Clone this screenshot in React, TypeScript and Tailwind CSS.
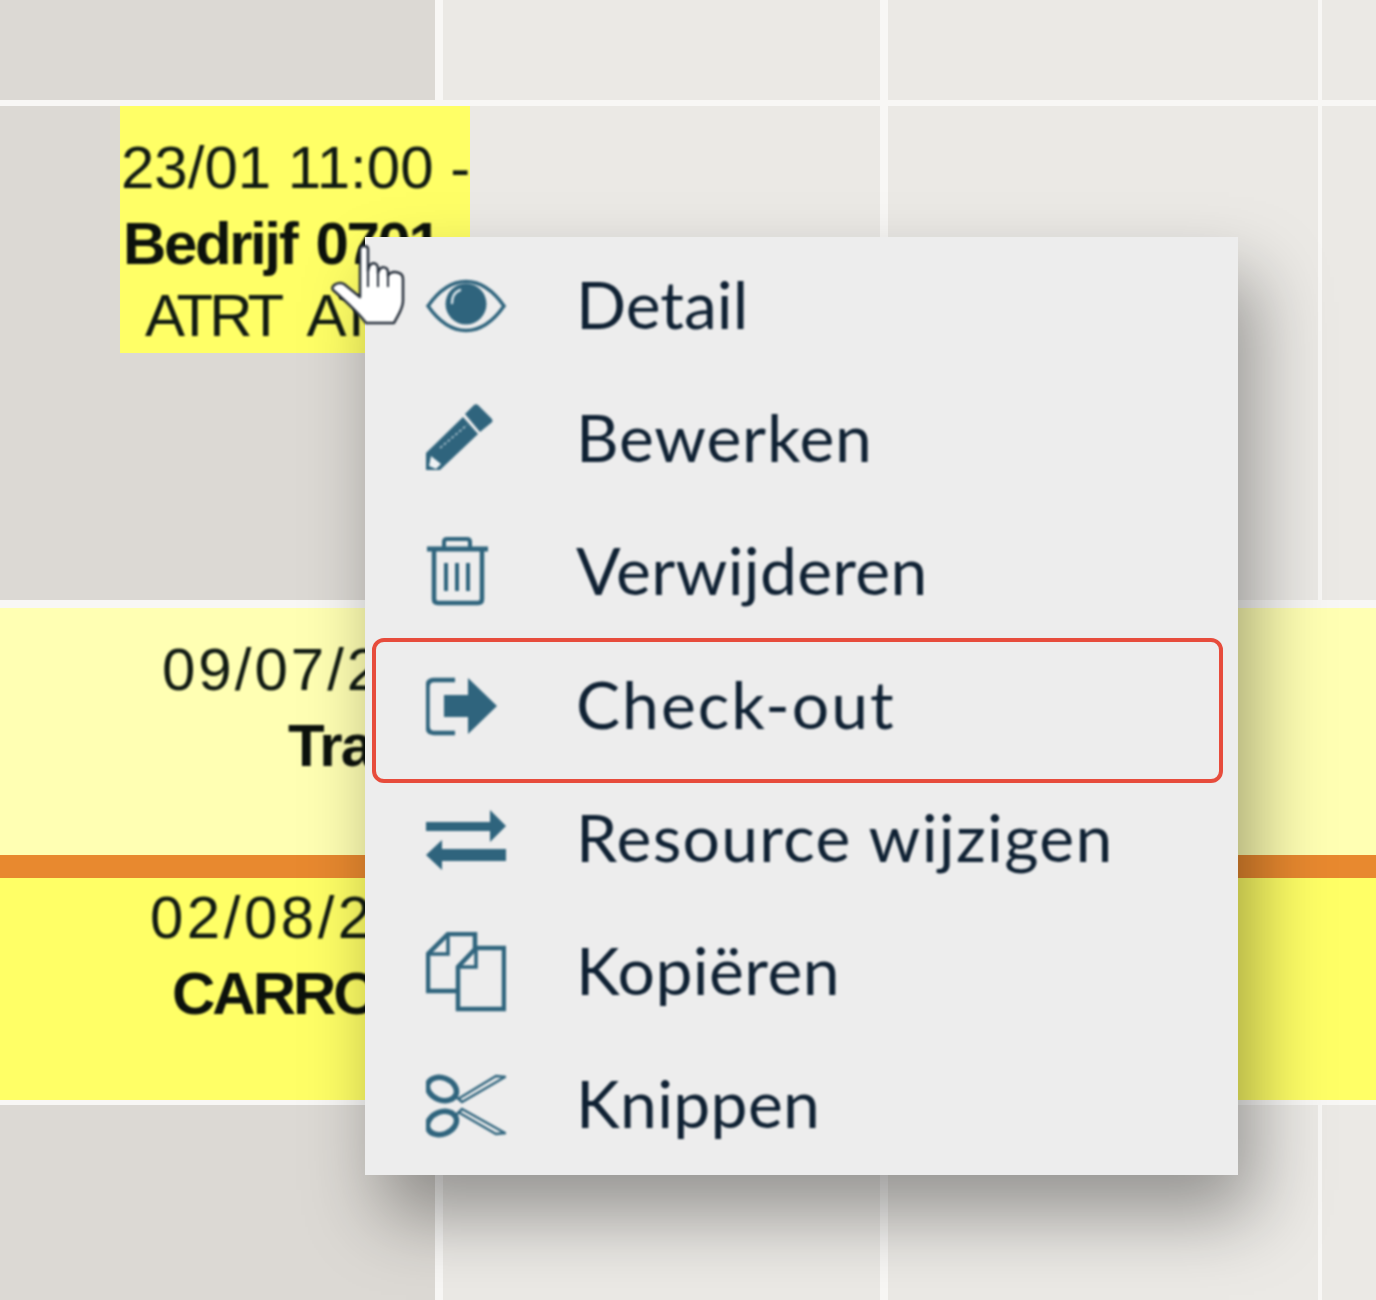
const eventText = "font-['Liberation_Sans',Arial,sans-serif] text-[60px] leading-[74px] text-[#101a12] whitespace-nowrap";

function Eye() {
  return (
    <svg width="80" height="80" viewBox="0 0 80 80" fill="none">
      <path d="M2 40C14 23 27 15.500 40 15.500S66 23 78 40C66 57 53 64.500 40 64.500S14 57 2 40Z" stroke="#2f647d" strokeWidth="3.500" />
      <circle cx="40" cy="38" r="20.500" fill="#2f647d" />
      <path d="M26 37C26 30 29 26 34 24" stroke="#d6e2e8" strokeWidth="2.500" strokeLinecap="round" />
    </svg>
  );
}

function Pencil() {
  return (
    <svg width="80" height="80" viewBox="0 0 80 80">
      <path d="M47 7Q49 4 52 6L65 19Q68 22 65 24L54 33L39 15Z" fill="#2f647d" />
      <path d="M37 18L52 35L14 71H-1V55Z" fill="#2f647d" />
      <path d="M14 49L41 26" stroke="#b9ccd5" strokeWidth="1.500" strokeDasharray="3 2" />
      <path d="M5 57L15 65L10 70L3 67Z" fill="#eef2f4" />
    </svg>
  );
}

function Trash() {
  return (
    <svg width="80" height="80" viewBox="0 0 80 80" fill="none" stroke="#2f647d">
      <path d="M1 17H62" strokeWidth="5" />
      <path d="M18 16V10Q18 7 21 7H41Q44 7 44 10V16" strokeWidth="4" />
      <path d="M8 18V67Q8 71 12 71H52Q56 71 56 67V18" strokeWidth="4.500" />
      <path d="M20 31V59M31 31V59M42 31V59" strokeWidth="4" />
    </svg>
  );
}

function CheckOut() {
  return (
    <svg width="80" height="80" viewBox="0 0 80 80" fill="none">
      <path d="M29 14H8Q1.500 14 1.500 21V60Q1.500 67 8 67H29" stroke="#2f647d" strokeWidth="4.500" />
      <path d="M18 29H42V12L71 40L42 68V51H18Z" fill="#2f647d" />
    </svg>
  );
}

function Swap() {
  return (
    <svg width="80" height="80" viewBox="0 0 80 80" fill="#2f647d">
      <path d="M0 23H64V11L80 27L64 43V32H0Z" />
      <path d="M80 50H16V41L0 56L16 71V62H80Z" />
    </svg>
  );
}

function Copy() {
  return (
    <svg width="80" height="80" viewBox="0 0 80 80" fill="none" stroke="#2f647d" strokeWidth="4.500">
      <path d="M32 59H2V22L22 2H49V16" />
      <path d="M2 22H22V2" strokeWidth="3.500" />
      <path d="M50 16H78V77H32V35Z" />
      <path d="M32 35H50V16" strokeWidth="3.500" />
    </svg>
  );
}

function Scissors() {
  return (
    <svg width="80" height="80" viewBox="0 0 80 80" fill="none" stroke="#2f647d">
      <ellipse cx="16" cy="24" rx="15" ry="11" transform="rotate(22 16 24)" strokeWidth="5.500" />
      <ellipse cx="16" cy="58" rx="15" ry="11" transform="rotate(-22 16 58)" strokeWidth="5.500" />
      <path d="M29 31L36 37L79 12L70 11L32 34" strokeWidth="2.500" />
      <path d="M29 51L36 44L79 68L70 69L32 47" strokeWidth="2.500" />
    </svg>
  );
}

const menuItems = [
  { label: "Detail", icon: <Eye />, tracking: "" },
  { label: "Bewerken", icon: <Pencil />, tracking: "tracking-[0.8px]" },
  { label: "Verwijderen", icon: <Trash />, tracking: "tracking-[0.3px]" },
  { label: "Check-out", icon: <CheckOut />, tracking: "tracking-[2px]" },
  { label: "Resource wijzigen", icon: <Swap />, tracking: "tracking-[1.300px]" },
  { label: "Kopiëren", icon: <Copy />, tracking: "tracking-[0.4px]" },
  { label: "Knippen", icon: <Scissors />, tracking: "tracking-[0.3px]" },
];

function Cells({ height }: { height: string }) {
  return (
    <div className={`grid grid-cols-[443px_445px_434px_54px] ${height}`}>
      <div className="border-r-[8px] border-[#f8f7f5] bg-[#dcd9d4]" />
      <div className="border-r-[8px] border-[#f8f7f5] bg-[#ebe9e5]" />
      <div className="border-r-[4px] border-[#f8f7f5] bg-[#ebe9e5]" />
      <div className="bg-[#ebe9e5]" />
    </div>
  );
}

function Cursor() {
  return (
    <svg className="absolute left-[328px] top-[243px] blur-[0.8px]" width="80" height="84" viewBox="0 0 80 84">
      <path
        d="M32 6C32 2 40 2 40 6V28C41 18 50 18 50 26V30C52 22 60 23 60 30V33C63 27 75 28 75 36V58C75 66 70 72 66 80H38C32 72 22 62 5 47C2 43 10 38 16 41L32 54Z"
        fill="#fff"
        stroke="#27303c"
        strokeWidth="2.500"
        strokeLinejoin="round"
      />
      <path d="M40 28V44M50 28V44M60 32V44" stroke="#27303c" strokeWidth="2" />
    </svg>
  );
}

export default function App() {
  return (
    <div className="relative h-[1300px] w-[1376px] overflow-hidden bg-[#f8f7f5]">
      <Cells height="h-[100px]" />
      <div className="h-[6px]" />

      <div className="relative grid h-[494px] grid-cols-[443px_445px_434px_54px]">
        <div className="border-r-[8px] border-[#f8f7f5] bg-[#dcd9d4]">
          <div className={`relative ml-[120px] h-[247px] w-[350px] bg-[#ffff66] pt-[25px] ${eventText}`}>
            <div className="pl-px blur-[0.8px]">23/01 11:00 -</div>
            <div className="pl-[3px] font-bold leading-[78px] tracking-[-2.400px] text-[#0c120c] blur-[0.8px] [word-spacing:5px]">Bedrijf 0701</div>
            <div className="pl-[25px] leading-[66px] tracking-[-4px] blur-[0.8px] [word-spacing:18px]">ATRT ATRT</div>
          </div>
        </div>
        <div className="border-r-[8px] border-[#f8f7f5] bg-[#ebe9e5]" />
        <div className="border-r-[4px] border-[#f8f7f5] bg-[#ebe9e5]" />
        <div className="bg-[#ebe9e5]" />
      </div>

      <div className="h-[8px]" />

      <div className={`h-[247px] overflow-hidden bg-[#ffffb3] pt-[25px] ${eventText}`}>
        <div className="pl-[162px] tracking-[3px] blur-[0.8px]">09/07/2</div>
        <div className="pl-[288px] font-bold leading-[78px] tracking-[-2px] text-[#0c120c] blur-[0.8px]">Tra</div>
      </div>
      <div className="h-[23px] bg-[#e8892f]" />
      <div className={`h-[222px] overflow-hidden bg-[#ffff66] pt-[3px] ${eventText}`}>
        <div className="pl-[150px] tracking-[3.500px] blur-[0.8px]">02/08/2</div>
        <div className="pl-[172px] font-bold leading-[78px] tracking-[-3px] text-[#0c120c] blur-[0.8px]">CARRO</div>
      </div>

      <div className="h-[5px]" />
      <Cells height="h-[195px]" />

      {/* context menu */}
      <div className="absolute left-[365px] top-[237px] h-[938px] w-[873px] bg-[#ededed] shadow-[16px_40px_70px_rgba(0,0,0,0.37)]">
        {menuItems.map((item) => (
          <div key={item.label} className="flex h-[133.300px] items-center pl-[61px]">
            <div className="w-[150px] shrink-0 pt-[4px] blur-[0.8px]">{item.icon}</div>
            <span className={`font-['Lato','Open_Sans',sans-serif] text-[66px] leading-none text-[#0f2133] blur-[0.8px] ${item.tracking}`}>
              {item.label}
            </span>
          </div>
        ))}
        <div className="absolute left-[7px] top-[401px] h-[145px] w-[851px] rounded-[12px] border-[4px] border-[#e74c3c]" />
      </div>

      <Cursor />
    </div>
  );
}
